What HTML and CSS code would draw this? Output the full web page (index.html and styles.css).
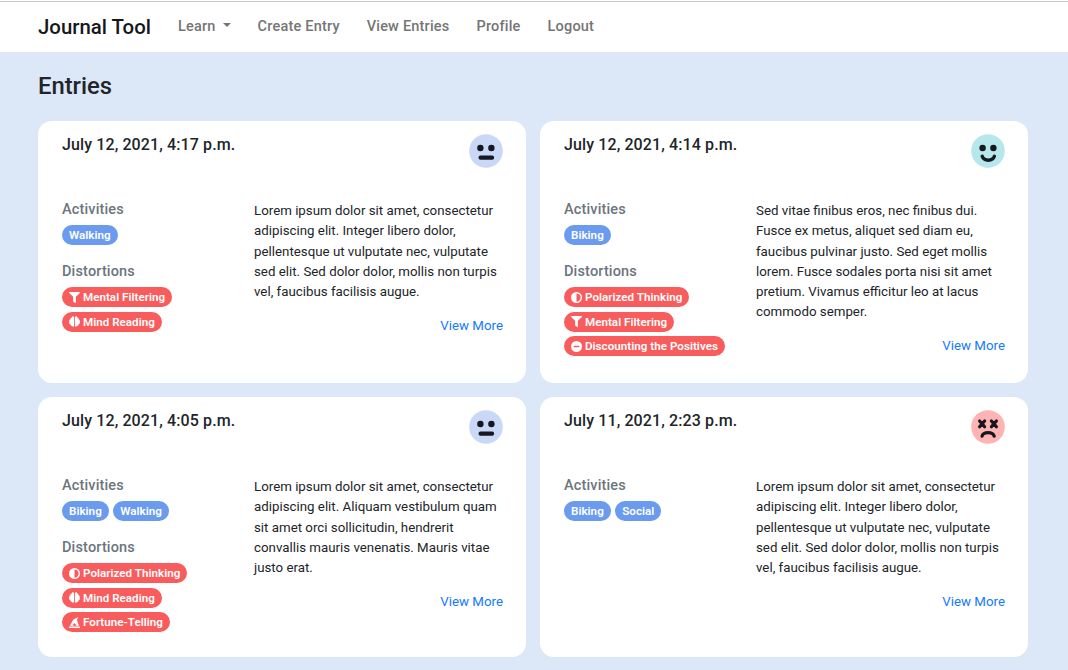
FILE: index.html
```
<!DOCTYPE html>
<html lang="en">
<head>
<meta charset="utf-8">
<title>Journal Tool</title>
<link rel="stylesheet" href="styles.css">
</head>
<body>
<svg class="defs" aria-hidden="true">
  <symbol id="neutral" viewBox="0 0 34 34"><circle cx="17" cy="17" r="16.8" fill="#c8d8f6"/><circle cx="11.4" cy="14" r="3.2"/><circle cx="22.4" cy="14" r="3.2"/><rect x="9.5" y="21.6" width="15.6" height="4.2" rx="2"/></symbol>
  <symbol id="happy" viewBox="0 0 34 34"><circle cx="17" cy="17" r="16.8" fill="#b5e7ed"/><circle cx="11.6" cy="14" r="3.2"/><circle cx="22.4" cy="14" r="3.2"/><path d="M11.200 22.300C13 27.500 21.600 27.500 23.400 22.300" fill="none" stroke="#17171f" stroke-width="3.4" stroke-linecap="round"/></symbol>
  <symbol id="awful" viewBox="0 0 34 34"><circle cx="17" cy="17" r="16.8" fill="#ffb3b3"/><path d="M8.6 11l5 5.800m0-5.800l-5 5.800M20.400 11l5 5.800m0-5.800l-5 5.800M11 26.200C12.500 21.500 21.700 21.500 23.200 26.200" fill="none" stroke="#17171f" stroke-width="3.2" stroke-linecap="round"/></symbol>
  <symbol id="filter" viewBox="0 0 512 512"><path d="M488 0H24C3 0-8 26 7 41l185 185v206c0 8 4 15 10 20l80 56c16 11 38 0 38-20V226L505 41C520 26 509 0 488 0z"/></symbol>
  <symbol id="brain" viewBox="0 0 16 16"><path d="M7.4 1.6C6.900-.1 4.300.1 4 2 2.500 2.200 1.800 3.500 2.200 4.700.4 5.400 0 6.800.4 8c-.6 1.500-.2 3.300 1.600 4 .1 1.700 1.200 2.600 2.500 2.500.8 1.600 2.900 1.500 2.900-.4zM8.600 1.600C9.100-.1 11.700.1 12 2c1.500.2 2.200 1.500 1.800 2.700 1.800.7 2.200 2.100 1.800 3.300.6 1.500.2 3.300-1.600 4-.1 1.700-1.200 2.600-2.500 2.500-.8 1.600-2.900 1.500-2.900-.4z"/></symbol>
  <symbol id="adjust" viewBox="0 0 16 16"><path fill-rule="evenodd" d="M8 0a8 8 0 1 0 0 16A8 8 0 0 0 8 0zm0 14V2a6 6 0 0 1 0 12z"/></symbol>
  <symbol id="minus" viewBox="0 0 16 16"><path fill-rule="evenodd" d="M8 0a8 8 0 1 0 0 16A8 8 0 0 0 8 0zM4 6.800h8v2.400H4z"/></symbol>
  <symbol id="hat" viewBox="0 0 16 16"><path fill-rule="evenodd" d="M.5 13.800h15c.6 0 .6 2.200 0 2.200H.5c-.6 0-.6-2.200 0-2.200zM1.500 12.800L6 4l7.500-4-2 4.500 3 8.300H9.500l1-2-2-.8-.8-2-.9 2-2 .9 2 .9.400 1z"/></symbol>
</svg>
<nav class="navbar">
  <a class="brand">Journal Tool</a>
  <a class="nav-link dropdown">Learn</a>
  <a class="nav-link">Create Entry</a>
  <a class="nav-link">View Entries</a>
  <a class="nav-link">Profile</a>
  <a class="nav-link">Logout</a>
</nav>
<main class="container">
  <h1 class="title">Entries</h1>
  <div class="entries">
    <article class="card">
      <header class="card-head"><h2 class="date">July 12, 2021, 4:17 p.m.</h2><svg class="mood"><use href="#neutral"/></svg></header>
      <div class="card-body">
        <div class="tags">
          <h3 class="label">Activities</h3>
          <div class="badges"><span class="badge">Walking</span></div>
          <h3 class="label">Distortions</h3>
          <div class="badges"><span class="badge red"><svg class="icon"><use href="#filter"/></svg>Mental Filtering</span><span class="badge red"><svg class="icon"><use href="#brain"/></svg>Mind Reading</span></div>
        </div>
        <div class="content"><p class="text">Lorem ipsum dolor sit amet, consectetur<br>adipiscing elit. Integer libero dolor,<br>pellentesque ut vulputate nec, vulputate<br>sed elit. Sed dolor dolor, mollis non turpis<br>vel, faucibus facilisis augue.</p><a class="more">View More</a></div>
      </div>
    </article>
    <article class="card">
      <header class="card-head"><h2 class="date">July 12, 2021, 4:14 p.m.</h2><svg class="mood"><use href="#happy"/></svg></header>
      <div class="card-body">
        <div class="tags">
          <h3 class="label">Activities</h3>
          <div class="badges"><span class="badge">Biking</span></div>
          <h3 class="label">Distortions</h3>
          <div class="badges"><span class="badge red"><svg class="icon"><use href="#adjust"/></svg>Polarized Thinking</span><span class="badge red"><svg class="icon"><use href="#filter"/></svg>Mental Filtering</span><span class="badge red"><svg class="icon"><use href="#minus"/></svg>Discounting the Positives</span></div>
        </div>
        <div class="content"><p class="text">Sed vitae finibus eros, nec finibus dui.<br>Fusce ex metus, aliquet sed diam eu,<br>faucibus pulvinar justo. Sed eget mollis<br>lorem. Fusce sodales porta nisi sit amet<br>pretium. Vivamus efficitur leo at lacus<br>commodo semper.</p><a class="more">View More</a></div>
      </div>
    </article>
    <article class="card">
      <header class="card-head"><h2 class="date">July 12, 2021, 4:05 p.m.</h2><svg class="mood"><use href="#neutral"/></svg></header>
      <div class="card-body">
        <div class="tags">
          <h3 class="label">Activities</h3>
          <div class="badges"><span class="badge">Biking</span><span class="badge">Walking</span></div>
          <h3 class="label">Distortions</h3>
          <div class="badges"><span class="badge red"><svg class="icon"><use href="#adjust"/></svg>Polarized Thinking</span><span class="badge red"><svg class="icon"><use href="#brain"/></svg>Mind Reading</span><span class="badge red"><svg class="icon"><use href="#hat"/></svg>Fortune-Telling</span></div>
        </div>
        <div class="content"><p class="text">Lorem ipsum dolor sit amet, consectetur<br>adipiscing elit. Aliquam vestibulum quam<br>sit amet orci sollicitudin, hendrerit<br>convallis mauris venenatis. Mauris vitae<br>justo erat.</p><a class="more">View More</a></div>
      </div>
    </article>
    <article class="card">
      <header class="card-head"><h2 class="date">July 11, 2021, 2:23 p.m.</h2><svg class="mood"><use href="#awful"/></svg></header>
      <div class="card-body">
        <div class="tags">
          <h3 class="label">Activities</h3>
          <div class="badges"><span class="badge">Biking</span><span class="badge">Social</span></div>
        </div>
        <div class="content"><p class="text">Lorem ipsum dolor sit amet, consectetur<br>adipiscing elit. Integer libero dolor,<br>pellentesque ut vulputate nec, vulputate<br>sed elit. Sed dolor dolor, mollis non turpis<br>vel, faucibus facilisis augue.</p><a class="more">View More</a></div>
      </div>
    </article>
  </div>
</main>
</body>
</html>
```
FILE: styles.css
```
* { box-sizing: border-box; margin: 0; }
body { background: #dce8f8; color: #212529; font-family: Roboto, sans-serif; height: 670px; overflow: hidden; }
.defs { position: absolute; width: 0; height: 0; }
.navbar { height: 52px; padding: 0 38px; background: #fff; border-top: 1px solid #fff; box-shadow: inset 0 1px #c8c8c8; display: flex; align-items: center; }
.brand { font-size: 20.4px; font-weight: 500; color: #17171a; margin-right: 27px; }
.nav-link { font-size: 14.5px; font-weight: 500; color: #757575; margin-right: 27px; letter-spacing: 0.2px; }
.dropdown::after { content: ""; display: inline-block; margin-left: 7px; vertical-align: 4px; border: 4px solid transparent; border-top-color: currentColor; border-bottom: 0; }
.container { padding: 20px 40px 0 38px; }
.title { font-size: 23.8px; line-height: 29px; font-weight: 500; }
.entries { margin-top: 20px; display: grid; grid-template-columns: 488px 488px; grid-template-rows: 262px 260px; gap: 14px; }
.card { background: #fff; border-radius: 14px; padding: 13px 23px 0 24px; }
.card-head { display: flex; justify-content: space-between; height: 65px; }
.date { font-size: 16px; line-height: 22px; font-weight: 500; letter-spacing: 0.11px; }
.mood { width: 34px; height: 34px; fill: #17171f; }
.card-body { display: flex; }
.tags { width: 192px; flex: none; }
.label { font-size: 14.5px; line-height: 20px; padding-top: 1px; font-weight: 500; color: #6c757d; letter-spacing: 0.15px; }
.badges { display: flex; flex-wrap: wrap; gap: 4.5px; margin: 5px 0 16px; }
.badge { display: flex; align-items: center; height: 20px; padding: 0 7px; border-radius: 10px; background: #6a9bee; color: #fff; font-size: 11.6px; font-weight: 600; letter-spacing: 0.03px; white-space: nowrap; }
.red { background: #f95c5c; }
.icon { width: 11px; height: 11px; fill: #fff; margin-right: 3px; }
.content { flex: 1; display: flex; flex-direction: column; padding-top: 2px; white-space: nowrap; }
.text, .more { font-size: 13.3px; line-height: 20.3px; }
.more { color: #147aff; align-self: flex-end; margin-top: 13.4px; }
```
